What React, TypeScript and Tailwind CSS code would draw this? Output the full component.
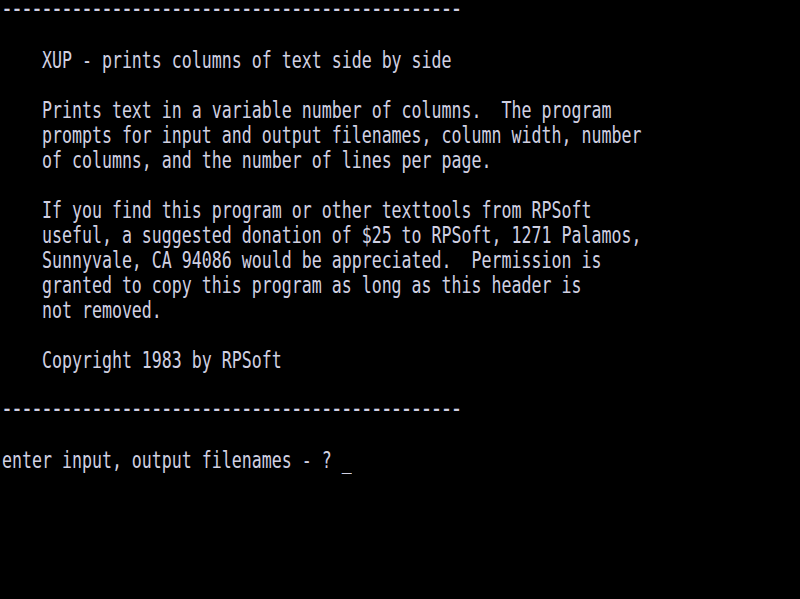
const rule = "-".repeat(46);

const screenLines: string[] = [
  rule,
  "",
  "    XUP - prints columns of text side by side",
  "",
  "    Prints text in a variable number of columns.  The program",
  "    prompts for input and output filenames, column width, number",
  "    of columns, and the number of lines per page.",
  "",
  "    If you find this program or other texttools from RPSoft",
  "    useful, a suggested donation of $25 to RPSoft, 1271 Palamos,",
  "    Sunnyvale, CA 94086 would be appreciated.  Permission is",
  "    granted to copy this program as long as this header is",
  "    not removed.",
  "",
  "    Copyright 1983 by RPSoft",
  "",
  rule,
  "",
  "enter input, output filenames - ? _",
  "",
  "",
  "",
  "",
  "",
];

function ScreenRow({ text }: { text: string }) {
  // the dashed rules sit high in their cell; no need to stretch them
  if (text === rule) {
    return (
      <div className="h-[25px] whitespace-pre">
        <span className="block h-[17px] leading-[17px] font-bold">{text}</span>
      </div>
    );
  }
  return (
    <div className="h-[25px] leading-[25px] whitespace-pre">
      <span className="inline-block h-[25px] origin-[0_18px] scale-y-[1.4]">
        {text || " "}
      </span>
    </div>
  );
}

export default function App() {
  return (
    <div className="h-[599px] w-[800px] overflow-hidden bg-black pl-[2px] font-['DejaVu_Sans_Mono',monospace] text-[16.6px] text-[#d0d0e2]">
      {screenLines.map((line, i) => (
        <ScreenRow key={i} text={line} />
      ))}
    </div>
  );
}
